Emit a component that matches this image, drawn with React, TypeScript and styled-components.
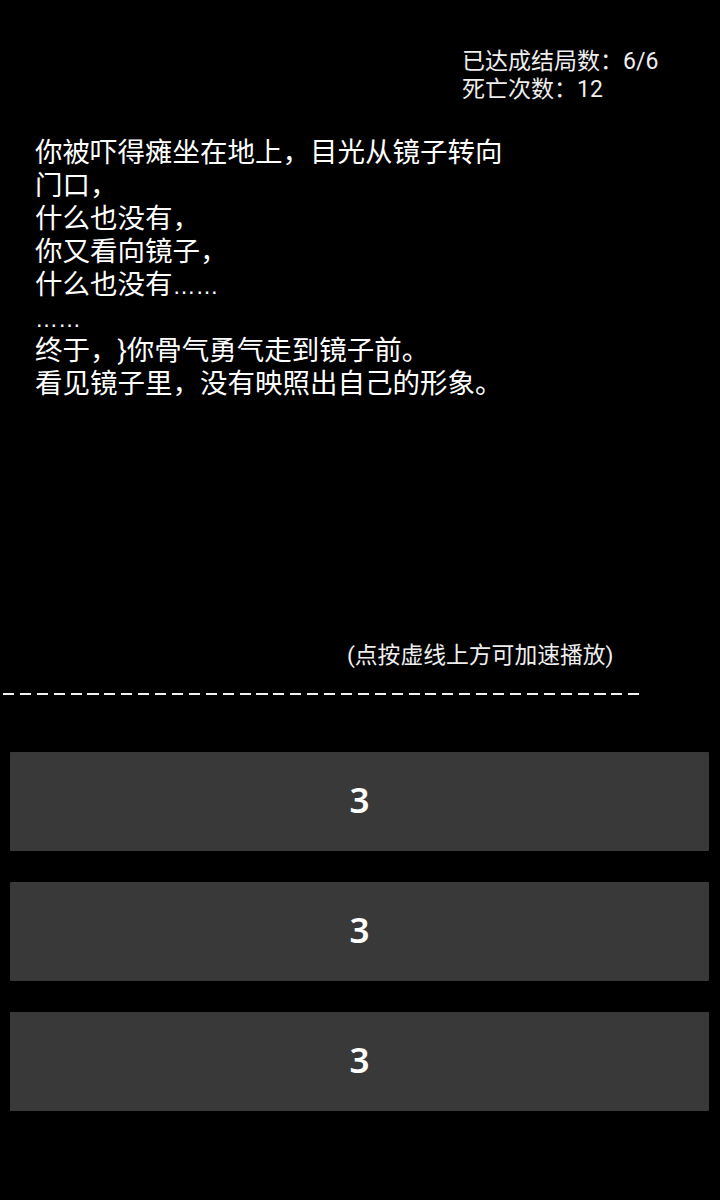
import { FunctionComponent } from "react";
import styled, { createGlobalStyle } from "styled-components";

const GlobalStyle = createGlobalStyle`
  html, body {
    margin: 0;
    padding: 0;
    background: #000;
  }
  body {
    font-family: Roboto, "Noto Sans CJK SC", sans-serif;
    color: #fff;
    text-spacing-trim: space-all;
  }
`;

const Screen = styled.main`
  width: 720px;
  min-height: 1200px;
  background: #000;
  display: flex;
  flex-direction: column;
`;

const Stats = styled.div`
  margin: 48px 0 0 462px;
  font-size: 23px;
  line-height: 28px;
  color: #eee;
`;

const StatLine = styled.div`
  white-space: nowrap;
`;

const Story = styled.div`
  box-sizing: border-box;
  width: 515px;
  height: 506px;
  margin-top: 32px;
  padding-left: 35px;
  font-size: 27.5px;
  line-height: 33px;
  color: #fff;
`;

const StoryLine = styled.div``;

// the app's "……" runs wide, evenly spaced dots
const Ellipsis = styled.span`
  font-family: "Liberation Sans", sans-serif;
  font-size: 23px;
  line-height: 1;
`;

const Hint = styled.div`
  margin-left: 347px;
  font-size: 22.8px;
  line-height: 28px;
  color: #eee;
  white-space: nowrap;
`;

const DashLine = styled.div`
  width: 636px;
  height: 2px;
  margin: 23px 0 0 3px;
  background: repeating-linear-gradient(
    90deg,
    #f0f0f0 0 11px,
    transparent 11px 16.9px
  );
`;

const Choices = styled.div`
  display: flex;
  flex-direction: column;
  gap: 31px;
  padding: 57px 11px 0 10px;
`;

const ChoiceButton = styled.button`
  height: 99px;
  padding: 0 0 5px;
  border: 0;
  border-radius: 1px;
  background: #393939;
  color: #fff;
  font-family: "Noto Sans", Roboto, sans-serif;
  font-size: 35px;
  font-weight: 600;
  cursor: pointer;
`;

const withEllipsis = (line: string) =>
  line.split(/(…+)/).map((part, i) =>
    part.startsWith("…") ? <Ellipsis key={i}>{part}</Ellipsis> : part
  );

const storyLines = [
  "你被吓得瘫坐在地上，目光从镜子转向门口，",
  "什么也没有，",
  "你又看向镜子，",
  "什么也没有……",
  "……",
  "终于，}你骨气勇气走到镜子前。",
  "看见镜子里，没有映照出自己的形象。",
];

const choices = ["3", "3", "3"];

const App: FunctionComponent = () => {
  const endings = { reached: 6, total: 6 };
  const deaths = 12;

  return (
    <>
      <GlobalStyle />
      <Screen>
        <Stats>
          <StatLine>
            已达成结局数：{endings.reached}/{endings.total}
          </StatLine>
          <StatLine>死亡次数：{deaths}</StatLine>
        </Stats>
        <Story>
          {storyLines.map((line, i) => (
            <StoryLine key={i}>{withEllipsis(line)}</StoryLine>
          ))}
        </Story>
        <Hint>(点按虚线上方可加速播放)</Hint>
        <DashLine />
        <Choices>
          {choices.map((label, i) => (
            <ChoiceButton key={i}>{label}</ChoiceButton>
          ))}
        </Choices>
      </Screen>
    </>
  );
};

export default App;
